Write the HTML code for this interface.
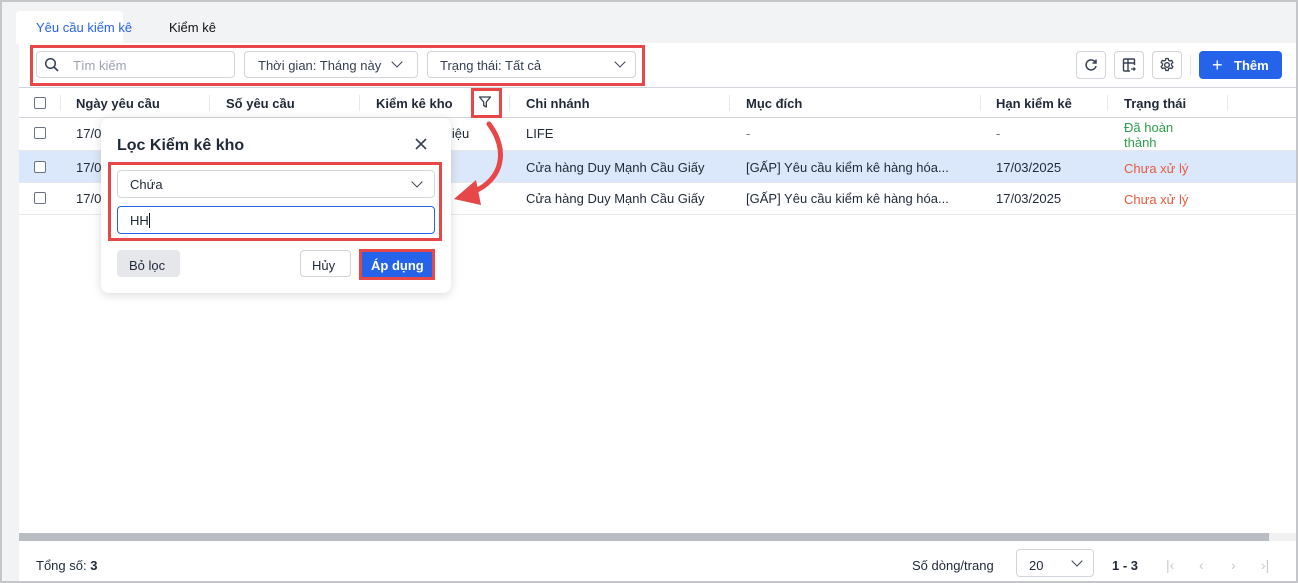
<!DOCTYPE html>
<html><head><meta charset="utf-8"><style>
*{box-sizing:border-box;margin:0;padding:0}
body{width:1298px;height:583px;overflow:hidden;background:#f2f3f5;font-family:"Liberation Sans",sans-serif;font-size:13px;color:#1f2937;position:relative}
.a{position:absolute}
.frame{left:0;top:0;width:1298px;height:583px;border:2px solid #c4c6ca;pointer-events:none}
.t{position:absolute;white-space:nowrap;line-height:16px;margin-top:1px}
.box{position:absolute;border:1px solid #d1d5db;border-radius:4px;background:#fff}
.red{position:absolute;border:3px solid #e8474a}
.cb{position:absolute;width:12px;height:12px;border:1px solid #6b7280;border-radius:2px;background:#fff}
.hl{position:absolute;height:1px;background:#e5e7eb}
.vd{position:absolute;width:1px;height:16px;background:#e5e7eb;top:95px}
.chev{position:absolute;width:8px;height:8px;border-right:1.6px solid #374151;border-bottom:1.6px solid #374151;transform:rotate(45deg)}
.h{font-weight:bold;color:#1f2937}
</style></head><body>
<div class="a" style="left:16px;top:11px;width:107px;height:33px;background:#fff;border-radius:4px 4px 0 0"></div>
<div class="t" style="left:36px;top:19px;color:#2563eb">Yêu cầu kiểm kê</div>
<div class="t" style="left:169px;top:19px;color:#111">Kiểm kê</div>
<div class="a" style="left:19px;top:43px;width:1277px;height:538px;background:#fff"></div>
<div class="box" style="left:36px;top:51px;width:199px;height:27px"></div>
<svg class="a" style="left:44px;top:57px" width="16" height="16" viewBox="0 0 16 16"><circle cx="6.5" cy="6.5" r="4.8" fill="none" stroke="#374151" stroke-width="1.5"/><path d="M10 10l4 4" stroke="#374151" stroke-width="1.6"/></svg>
<div class="t" style="left:73px;top:57px;color:#9ca3af">Tìm kiếm</div>
<div class="box" style="left:244px;top:51px;width:174px;height:27px"></div>
<div class="t" style="left:258px;top:57px;color:#374151">Thời gian: Tháng này</div>
<div class="chev" style="left:393px;top:58px"></div>
<div class="box" style="left:427px;top:51px;width:209px;height:27px"></div>
<div class="t" style="left:440px;top:57px;color:#374151">Trạng thái: Tất cả</div>
<div class="chev" style="left:616px;top:58px"></div>
<div class="red" style="left:30px;top:45px;width:615px;height:41px"></div>
<div class="box" style="left:1076px;top:51px;width:30px;height:28px"></div>
<svg class="a" style="left:1083px;top:57px" width="16" height="16" viewBox="0 0 16 16"><path d="M12.5 5.5A5 5 0 1 0 13 9" fill="none" stroke="#374151" stroke-width="1.5"/><path d="M13 2.5v3.5h-3.5" fill="none" stroke="#374151" stroke-width="1.5"/></svg>
<div class="box" style="left:1114px;top:51px;width:30px;height:28px"></div>
<svg class="a" style="left:1121px;top:57px" width="16" height="16" viewBox="0 0 16 16"><path d="M9 14H3.5a1 1 0 0 1-1-1V3a1 1 0 0 1 1-1h9a1 1 0 0 1 1 1v5M2.5 6h11M7 2v12" fill="none" stroke="#374151" stroke-width="1.4"/><path d="M10 12h4M12.5 10.5l1.5 1.5-1.5 1.5" fill="none" stroke="#374151" stroke-width="1.3"/></svg>
<div class="box" style="left:1152px;top:51px;width:30px;height:28px"></div>
<svg class="a" style="left:1159px;top:57px" width="16" height="16" viewBox="0 0 16 16"><circle cx="8" cy="8" r="2.3" fill="none" stroke="#374151" stroke-width="1.4"/><path d="M6.8 1.5h2.4l.4 1.8 1.3.7 1.8-.6 1.2 2-1.4 1.3v1.6l1.4 1.3-1.2 2-1.8-.6-1.3.7-.4 1.8H6.8l-.4-1.8-1.3-.7-1.8.6-1.2-2 1.4-1.3V6.7L2.1 5.4l1.2-2 1.8.6 1.3-.7z" fill="none" stroke="#374151" stroke-width="1.3" stroke-linejoin="round"/></svg>
<div class="a" style="left:1190px;top:55px;width:1px;height:20px;background:#e5e7eb"></div>
<div class="a" style="left:1199px;top:51px;width:83px;height:28px;background:#2563eb;border-radius:4px"></div>
<div class="t" style="left:1212px;top:56px;color:#fff;font-size:18px;line-height:18px;margin-top:0">+</div>
<div class="t" style="left:1234px;top:57px;color:#fff;font-weight:bold">Thêm</div>
<div class="hl" style="left:19px;top:87px;width:1277px;background:#d1d5db"></div>
<div class="hl" style="left:19px;top:117px;width:1277px;background:#d1d5db"></div>
<div class="cb" style="left:34px;top:97px"></div>
<div class="vd" style="left:60px"></div><div class="vd" style="left:209px"></div><div class="vd" style="left:359px"></div><div class="vd" style="left:509px"></div><div class="vd" style="left:729px"></div><div class="vd" style="left:980px"></div><div class="vd" style="left:1107px"></div><div class="vd" style="left:1227px"></div>
<div class="t h" style="left:76px;top:95px">Ngày yêu cầu</div>
<div class="t h" style="left:226px;top:95px">Số yêu cầu</div>
<div class="t h" style="left:376px;top:95px">Kiểm kê kho</div>
<svg class="a" style="left:478px;top:95px" width="14" height="14" viewBox="0 0 14 14"><path d="M1.5 2h11L8.3 7v5L5.7 10.5V7z" fill="none" stroke="#374151" stroke-width="1.3" stroke-linejoin="round"/></svg>
<div class="red" style="left:471px;top:88px;width:31px;height:30px"></div>
<div class="t h" style="left:526px;top:95px">Chi nhánh</div>
<div class="t h" style="left:746px;top:95px">Mục đích</div>
<div class="t h" style="left:996px;top:95px">Hạn kiểm kê</div>
<div class="t h" style="left:1124px;top:95px">Trạng thái</div>
<div class="a" style="left:19px;top:151px;width:1277px;height:31px;background:#dbe8fb"></div>
<div class="hl" style="left:19px;top:150px;width:1277px"></div>
<div class="hl" style="left:19px;top:182px;width:1277px"></div>
<div class="hl" style="left:19px;top:214px;width:1277px"></div>
<div class="cb" style="left:34px;top:127px"></div>
<div class="cb" style="left:34px;top:161px"></div>
<div class="cb" style="left:34px;top:192px"></div>
<div class="t" style="left:76px;top:125px">17/0</div>
<div class="t" style="left:76px;top:159px">17/0</div>
<div class="t" style="left:76px;top:190px">17/0</div>
<div class="t" style="left:449px;top:125px">liệu</div>
<div class="t" style="left:526px;top:125px">LIFE</div>
<div class="t" style="left:746px;top:125px;color:#6b7280">-</div>
<div class="t" style="left:996px;top:125px;color:#6b7280">-</div>
<div class="t" style="left:1124px;top:119px;color:#2e9e4f;line-height:15px">Đã hoàn<br>thành</div>
<div class="t" style="left:526px;top:159px">Cửa hàng Duy Mạnh Cầu Giấy</div>
<div class="t" style="left:746px;top:159px">[GẤP] Yêu cầu kiểm kê hàng hóa...</div>
<div class="t" style="left:996px;top:159px">17/03/2025</div>
<div class="t" style="left:1124px;top:160px;color:#e85a3c">Chưa xử lý</div>
<div class="t" style="left:526px;top:190px">Cửa hàng Duy Mạnh Cầu Giấy</div>
<div class="t" style="left:746px;top:190px">[GẤP] Yêu cầu kiểm kê hàng hóa...</div>
<div class="t" style="left:996px;top:190px">17/03/2025</div>
<div class="t" style="left:1124px;top:191px;color:#e85a3c">Chưa xử lý</div>
<svg class="a" style="left:440px;top:115px" width="80" height="100" viewBox="0 0 80 100"><path d="M49 9C68 34 64 64 33 77" fill="none" stroke="#e8474a" stroke-width="5" stroke-linecap="round"/><path d="M14 84L36 65L41 90z" fill="#e8474a"/></svg>
<div class="a" style="left:101px;top:118px;width:350px;height:175px;background:#fff;border-radius:8px;box-shadow:0 2px 10px rgba(0,0,0,.15)"></div>
<div class="t" style="left:117px;top:136px;font-size:16px;line-height:18px;font-weight:bold;color:#1f2937">Lọc Kiểm kê kho</div>
<svg class="a" style="left:415px;top:138px" width="12" height="12" viewBox="0 0 12 12"><path d="M1 1l10 10M11 1L1 11" stroke="#374151" stroke-width="1.6"/></svg>
<div class="box" style="left:117px;top:170px;width:318px;height:28px"></div>
<div class="t" style="left:130px;top:176px">Chứa</div>
<div class="chev" style="left:413px;top:178px"></div>
<div class="box" style="left:117px;top:206px;width:318px;height:28px;border-color:#2563eb"></div>
<div class="t" style="left:130px;top:212px">HH<span style="display:inline-block;width:1px;height:15px;background:#111;vertical-align:-3px"></span></div>
<div class="red" style="left:108px;top:162px;width:334px;height:79px"></div>
<div class="a" style="left:117px;top:250px;width:63px;height:27px;background:#e5e7eb;border-radius:4px"></div>
<div class="t" style="left:129px;top:257px">Bỏ lọc</div>
<div class="box" style="left:300px;top:250px;width:51px;height:27px"></div>
<div class="t" style="left:312px;top:257px">Hủy</div>
<div class="a" style="left:361px;top:250px;width:72px;height:28px;background:#2563eb"></div>
<div class="red" style="left:359px;top:249px;width:76px;height:31px"></div>
<div class="t" style="left:371px;top:257px;color:#fff;font-weight:bold">Áp dụng</div>
<div class="a" style="left:19px;top:533px;width:1277px;height:8px;background:#f1f1f1"></div>
<div class="a" style="left:19px;top:533px;width:1250px;height:8px;background:#b8bcc3"></div>
<div class="t" style="left:36px;top:557px">Tổng số: <b>3</b></div>
<div class="t" style="left:912px;top:557px">Số dòng/trang</div>
<div class="box" style="left:1016px;top:549px;width:78px;height:28px"></div>
<div class="t" style="left:1029px;top:557px">20</div>
<div class="chev" style="left:1073px;top:557px"></div>
<div class="t" style="left:1112px;top:557px;font-weight:bold">1 - 3</div>
<div class="t" style="left:1166px;top:556px;color:#c7cad0;font-size:14px">|‹</div>
<div class="t" style="left:1199px;top:556px;color:#c7cad0;font-size:14px">‹</div>
<div class="t" style="left:1231px;top:556px;color:#c7cad0;font-size:14px">›</div>
<div class="t" style="left:1261px;top:556px;color:#c7cad0;font-size:14px">›|</div>
<div class="a frame"></div>
</body></html>
